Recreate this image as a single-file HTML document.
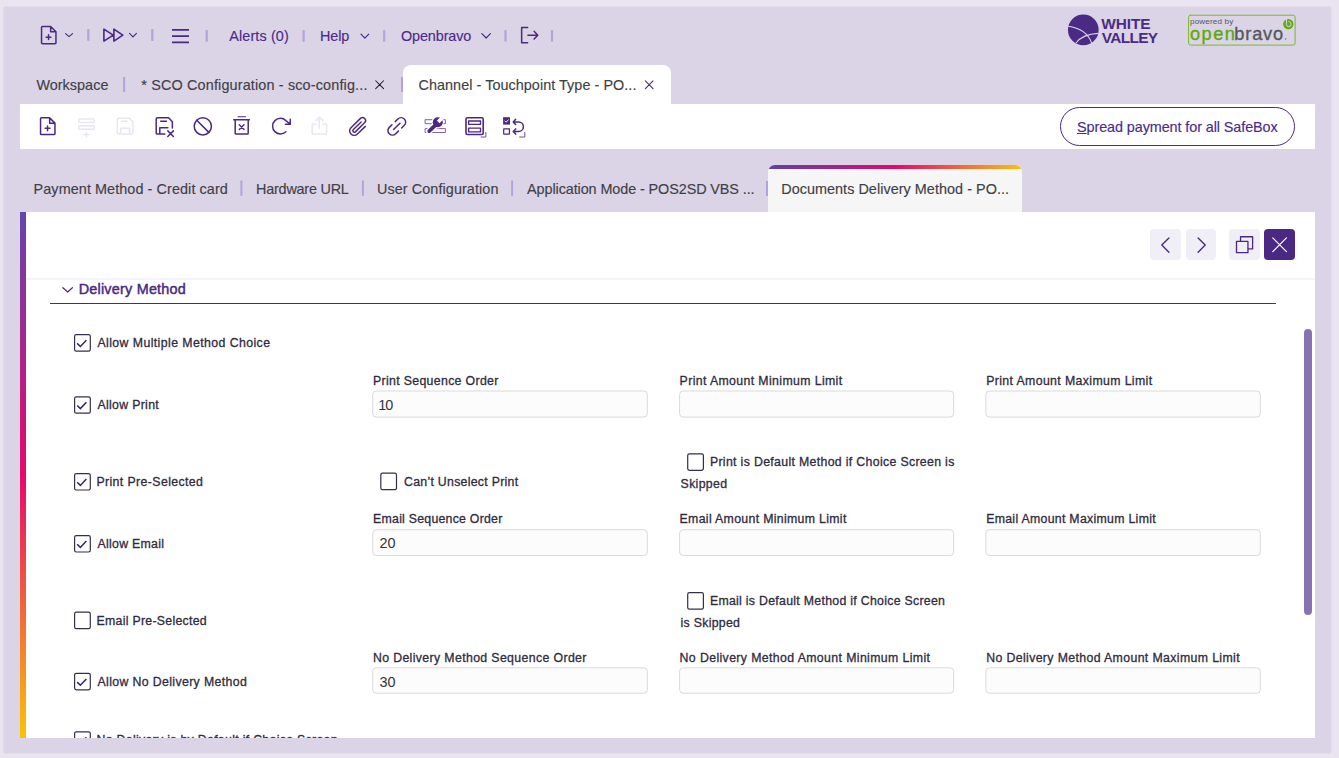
<!DOCTYPE html>
<html lang="en"><head><meta charset="utf-8"><title>Channel - Touchpoint Type - Openbravo</title>
<style>
*{box-sizing:border-box}
html,body{margin:0;padding:0}
body{width:1339px;height:758px;overflow:hidden;position:relative;background:#e9e4ef;font-family:"Liberation Sans",Arial,sans-serif;}
.abs{position:absolute}
#panel{left:4px;top:7px;width:1327px;height:746px;background:#dbd4e6;box-shadow:0 0 1.5px rgba(60,40,90,.14)}
#maintab{left:403px;top:65px;width:268px;height:40px;background:#fff;border-radius:8px 8px 0 0}
#toolbar{left:20px;top:104px;width:1295px;height:45px;background:#fff}
#spread{left:1060.2px;top:107px;width:234.6px;height:38.8px;border:1px solid #4a2883;border-radius:20px;background:#fff}
#subtab{left:768px;top:164.8px;width:253.6px;height:47.4px;background:#f6f6f6;border-radius:7px 7px 0 0;overflow:hidden}
#subtab i{display:block;height:4.3px;background:linear-gradient(90deg,#6040aa 0%,#e6086b 50%,#fdc106 100%)}
#form{left:20px;top:212px;width:1295px;height:526px;background:#fff}
#gbar{left:20px;top:212px;width:6px;height:526px;background:linear-gradient(180deg,#6446ad 0%,#e6086b 50%,#fdc106 100%)}
#gbar2{left:20px;top:212px;width:6.4px;height:67.5px;background:linear-gradient(180deg,#6446ad 0%,#e6086b 50%,#fdc106 100%);background-size:100% 526px}
#hline{left:26px;top:278.1px;width:1289px;height:1.7px;background:#f5f4fa}
#sline{left:50.3px;top:302.8px;width:1225.7px;height:1.1px;background:#4a2883}
.btn{top:229.2px;width:30.8px;height:30.8px;border-radius:4px;background:#f0eef6}
#sb{left:1304px;top:329px;width:7.5px;height:286px;border-radius:4px;background:#8972b0}
#bottom{left:4px;top:738px;width:1327px;height:15px;background:#dbd4e6}
.t{position:absolute;white-space:nowrap;line-height:20px;height:20px}
.nav{color:#4a2b8a;-webkit-text-stroke:0.15px #4a2b8a}
.tab{color:#3f3f46;-webkit-text-stroke:0.15px #3f3f46}
.sec{color:#4a2883;-webkit-text-stroke:0.45px #4a2883}
.lab{color:#2f2b3f;-webkit-text-stroke:0.3px #2f2b3f}
.val{color:#33333a}
.wv{color:#4b2a85}
.pw{color:#555}
.obg{color:#5fa80e;-webkit-text-stroke:0.36px #5fa80e}
.obd{color:#55595c;-webkit-text-stroke:0.36px #55595c}
svg{position:absolute;left:0;top:0;overflow:visible}
</style></head>
<body>
<div id="panel" class="abs"></div>
<div class="abs" style="left:400.5px;top:77px;width:2px;height:15px;background:#b5a1de"></div>
<div id="maintab" class="abs"></div>
<div id="toolbar" class="abs"></div>
<div id="spread" class="abs"></div>
<div class="abs" style="left:766.1px;top:180.5px;width:2px;height:15.3px;background:#b5a1de"></div>
<div id="subtab" class="abs"><i></i></div>
<div id="form" class="abs"></div>
<div id="gbar" class="abs"></div>
<div id="gbar2" class="abs"></div>
<div id="hline" class="abs"></div>
<div id="sline" class="abs"></div>
<div class="abs btn" style="left:1150.4px"></div>
<div class="abs btn" style="left:1185.6px"></div>
<div class="abs btn" style="left:1229.1px"></div>
<div class="abs btn" style="left:1264px;background:#4a2883"></div>
<div id="sb" class="abs"></div>
<svg width="1339" height="758" viewBox="0 0 1339 758" fill="none"><rect x="372.7" y="391" width="274.6" height="26.1" rx="3.5" fill="#fcfcfc" stroke="#dadade" stroke-width="1"/>
<rect x="372.7" y="529.7" width="274.6" height="25.8" rx="3.5" fill="#fcfcfc" stroke="#dadade" stroke-width="1"/>
<rect x="372.7" y="667.8" width="274.6" height="25.4" rx="3.5" fill="#fcfcfc" stroke="#dadade" stroke-width="1"/>
<rect x="679.6" y="391" width="274" height="26.1" rx="3.5" fill="#fcfcfc" stroke="#dadade" stroke-width="1"/>
<rect x="679.6" y="529.7" width="274" height="25.8" rx="3.5" fill="#fcfcfc" stroke="#dadade" stroke-width="1"/>
<rect x="679.6" y="667.8" width="274" height="25.4" rx="3.5" fill="#fcfcfc" stroke="#dadade" stroke-width="1"/>
<rect x="985.9" y="391" width="274.4" height="26.1" rx="3.5" fill="#fcfcfc" stroke="#dadade" stroke-width="1"/>
<rect x="985.9" y="529.7" width="274.4" height="25.8" rx="3.5" fill="#fcfcfc" stroke="#dadade" stroke-width="1"/>
<rect x="985.9" y="667.8" width="274.4" height="25.4" rx="3.5" fill="#fcfcfc" stroke="#dadade" stroke-width="1"/>
<rect x="74.6" y="334.7" width="15.7" height="16.4" rx="1.7" fill="#fff" stroke="#34304a" stroke-width="1.2"/><path d="M77.2,343.4L80.35,346.5L86.4,340.2" fill="none" stroke="#3a1f6e" stroke-width="1.5"/>
<rect x="74.6" y="396.8" width="15.7" height="16.4" rx="1.7" fill="#fff" stroke="#34304a" stroke-width="1.2"/><path d="M77.2,405.5L80.35,408.6L86.4,402.3" fill="none" stroke="#3a1f6e" stroke-width="1.5"/>
<rect x="74.6" y="473.6" width="15.7" height="16.4" rx="1.7" fill="#fff" stroke="#34304a" stroke-width="1.2"/><path d="M77.2,482.3L80.35,485.4L86.4,479.1" fill="none" stroke="#3a1f6e" stroke-width="1.5"/>
<rect x="74.6" y="535.6" width="15.7" height="16.4" rx="1.7" fill="#fff" stroke="#34304a" stroke-width="1.2"/><path d="M77.2,544.3L80.35,547.4L86.4,541.1" fill="none" stroke="#3a1f6e" stroke-width="1.5"/>
<rect x="74.6" y="612.2" width="15.7" height="16.4" rx="1.7" fill="#fff" stroke="#34304a" stroke-width="1.2"/>
<rect x="74.6" y="673.4" width="15.7" height="16.4" rx="1.7" fill="#fff" stroke="#34304a" stroke-width="1.2"/><path d="M77.2,682.1L80.35,685.2L86.4,678.9" fill="none" stroke="#3a1f6e" stroke-width="1.5"/>
<rect x="74.6" y="731.8" width="15.7" height="16.4" rx="1.7" fill="#fff" stroke="#34304a" stroke-width="1.2"/><path d="M77.2,740.5L80.35,743.6L86.4,737.3" fill="none" stroke="#3a1f6e" stroke-width="1.5"/>
<rect x="380.8" y="473.2" width="15.7" height="16.4" rx="1.7" fill="#fff" stroke="#34304a" stroke-width="1.2"/>
<rect x="687.7" y="453.9" width="15.7" height="16.4" rx="1.7" fill="#fff" stroke="#34304a" stroke-width="1.2"/>
<rect x="687.7" y="592.7" width="15.7" height="16.4" rx="1.7" fill="#fff" stroke="#34304a" stroke-width="1.2"/></svg>
<div class="t nav" style="left:229.30px;top:26.00px;font-size:14.4px;letter-spacing:0.114px">Alerts (0)</div>
<div class="t nav" style="left:320.00px;top:26.00px;font-size:14.4px;letter-spacing:-0.098px">Help</div>
<div class="t nav" style="left:401.00px;top:26.00px;font-size:14.4px;letter-spacing:-0.112px">Openbravo</div>
<div class="t tab" style="left:36.40px;top:75.00px;font-size:14.4px;letter-spacing:0.036px">Workspace</div>
<div class="t tab" style="left:141.30px;top:75.00px;font-size:14.4px;letter-spacing:0.157px">* SCO Configuration - sco-config...</div>
<div class="t tab" style="left:418.50px;top:75.00px;font-size:14.4px;letter-spacing:0.051px">Channel - Touchpoint Type - PO...</div>
<div class="t nav" style="left:1077.00px;top:117.00px;font-size:14.4px;letter-spacing:-0.086px"><u>S</u>pread payment for all SafeBox</div>
<div class="t tab" style="left:33.60px;top:179.00px;font-size:14.4px;letter-spacing:0.083px">Payment Method - Credit card</div>
<div class="t tab" style="left:256.10px;top:179.00px;font-size:14.4px;letter-spacing:-0.224px">Hardware URL</div>
<div class="t tab" style="left:377.00px;top:179.00px;font-size:14.4px;letter-spacing:0.084px">User Configuration</div>
<div class="t tab" style="left:527.10px;top:179.00px;font-size:14.4px;letter-spacing:-0.089px">Application Mode - POS2SD VBS ...</div>
<div class="t tab" style="left:781.20px;top:179.00px;font-size:14.4px;letter-spacing:0.046px">Documents Delivery Method - PO...</div>
<div class="t sec" style="left:78.70px;top:279.00px;font-size:14.4px;letter-spacing:0.224px">Delivery Method</div>
<div class="t lab" style="left:97.40px;top:333.00px;font-size:12.3px;letter-spacing:0.420px">Allow Multiple Method Choice</div>
<div class="t lab" style="left:97.40px;top:395.00px;font-size:12.3px;letter-spacing:0.323px">Allow Print</div>
<div class="t lab" style="left:96.40px;top:472.00px;font-size:12.3px;letter-spacing:0.397px">Print Pre-Selected</div>
<div class="t lab" style="left:97.40px;top:534.00px;font-size:12.3px;letter-spacing:0.308px">Allow Email</div>
<div class="t lab" style="left:96.50px;top:611.00px;font-size:12.3px;letter-spacing:0.288px">Email Pre-Selected</div>
<div class="t lab" style="left:97.50px;top:672.00px;font-size:12.3px;letter-spacing:0.368px">Allow No Delivery Method</div>
<div class="t lab" style="left:96.50px;top:730.00px;font-size:12.3px;letter-spacing:0.312px">No Delivery is by Default if Choice Screen</div>
<div class="t lab" style="left:372.90px;top:371.00px;font-size:12.3px;letter-spacing:0.345px">Print Sequence Order</div>
<div class="t lab" style="left:679.60px;top:371.00px;font-size:12.3px;letter-spacing:0.379px">Print Amount Minimum Limit</div>
<div class="t lab" style="left:986.20px;top:371.00px;font-size:12.3px;letter-spacing:0.378px">Print Amount Maximum Limit</div>
<div class="t lab" style="left:404.00px;top:472.00px;font-size:12.3px;letter-spacing:0.287px">Can’t Unselect Print</div>
<div class="t lab" style="left:709.90px;top:452.00px;font-size:12.3px;letter-spacing:0.336px">Print is Default Method if Choice Screen is</div>
<div class="t lab" style="left:680.60px;top:474.00px;font-size:12.3px;letter-spacing:0.333px">Skipped</div>
<div class="t lab" style="left:373.10px;top:509.00px;font-size:12.3px;letter-spacing:0.252px">Email Sequence Order</div>
<div class="t lab" style="left:679.60px;top:509.00px;font-size:12.3px;letter-spacing:0.328px">Email Amount Minimum Limit</div>
<div class="t lab" style="left:986.20px;top:509.00px;font-size:12.3px;letter-spacing:0.300px">Email Amount Maximum Limit</div>
<div class="t lab" style="left:709.90px;top:591.00px;font-size:12.3px;letter-spacing:0.296px">Email is Default Method if Choice Screen</div>
<div class="t lab" style="left:680.60px;top:613.00px;font-size:12.3px;letter-spacing:0.289px">is Skipped</div>
<div class="t lab" style="left:372.90px;top:648.00px;font-size:12.3px;letter-spacing:0.371px">No Delivery Method Sequence Order</div>
<div class="t lab" style="left:679.60px;top:648.00px;font-size:12.3px;letter-spacing:0.386px">No Delivery Method Amount Minimum Limit</div>
<div class="t lab" style="left:986.20px;top:648.00px;font-size:12.3px;letter-spacing:0.375px">No Delivery Method Amount Maximum Limit</div>
<div class="t val" style="left:378.30px;top:394.50px;font-size:14.4px;letter-spacing:-1.103px">10</div>
<div class="t val" style="left:379.40px;top:533.00px;font-size:14.4px;letter-spacing:-0.003px">20</div>
<div class="t val" style="left:379.40px;top:671.70px;font-size:14.4px;letter-spacing:-0.003px">30</div>
<div class="t wv" style="left:1101.30px;top:13.60px;font-size:15.4px;letter-spacing:-0.080px;font-weight:700">WHITE</div>
<div class="t wv" style="left:1101.80px;top:27.80px;font-size:15.4px;letter-spacing:-0.661px;font-weight:700">VALLEY</div>
<div class="t pw" style="left:1190.00px;top:12.00px;font-size:8.1px;letter-spacing:0.156px">powered by</div>
<div class="t obg" style="left:1189.90px;top:24.00px;font-size:18.2px;letter-spacing:1.518px">open</div>
<div class="t obd" style="left:1234.30px;top:24.00px;font-size:18.2px;letter-spacing:0.830px">bravo</div>
<div id="bottom" class="abs"></div>
<svg width="1339" height="758" viewBox="0 0 1339 758" fill="none" stroke="#4a2883" stroke-width="1.5" stroke-linecap="round" stroke-linejoin="round"><circle cx="1083.3" cy="29.95" r="15.35" fill="#4b2a85" stroke="none"/>
<path d="M1067.9,26.3C1077,27.5 1087.5,31.5 1091.6,42.9M1076,43C1080.5,37 1087.5,33.9 1098.3,33.4" stroke="#dbd4e6" stroke-width="1.15" stroke-linecap="butt"/>
<rect x="1188.6" y="15.2" width="106.5" height="29.9" rx="2" stroke="#7ab929" stroke-width="1"/>
<circle cx="1288.3" cy="24.1" r="5.2" fill="#62ab12" stroke="none"/>
<path d="M1286.45,18.6V24.6A2.35,2.35 0 0 0 1291.1,24.6C1291.1,22.7 1289.9,21.5 1288.5,21.4" stroke="#e2dbee" stroke-width="0.95" stroke-linecap="butt"/>
<circle cx="1285.6" cy="38.9" r="0.85" fill="#8a8d90" stroke="none"/>
<path d="M42.45,26.45H50.65L55.95,31.75V42.75Q55.95,43.65 55.05,43.65H42.45Q41.55,43.65 41.55,42.75V27.35Q41.55,26.45 42.45,26.45ZM50.65,26.45V31.75H55.95M46.15,37.2H50.95M48.55,34.8V39.6" stroke-width="1.5"/>
<path d="M65.58,33.58L69.05,36.62L72.52,33.58" stroke-width="1.15"/>
<rect x="87.2" y="29" width="2.2" height="11.8" fill="#b5a1de" stroke="none"/>
<path d="M103.9,29.2V41.1L113.2,35.15ZM113.9,29.2V41.1L122.8,35.15Z" stroke-width="1.6"/>
<path d="M129.53,33.38L132.98,36.92L136.43,33.38" stroke-width="1.15"/>
<rect x="151.2" y="29" width="2.2" height="11.9" fill="#b5a1de" stroke="none"/>
<path d="M172,29.9H189M172,36.1H189M172,42.3H189" stroke-width="1.65" stroke-linecap="butt"/>
<rect x="205.6" y="30" width="2.2" height="11.7" fill="#b5a1de" stroke="none"/>
<rect x="302.5" y="30" width="2.2" height="11.7" fill="#b5a1de" stroke="none"/>
<path d="M360.97,34.08L364.85,38.12L368.73,34.08" stroke-width="1.15"/>
<rect x="383.1" y="30.1" width="2.2" height="11.5" fill="#b5a1de" stroke="none"/>
<path d="M481.88,33.68L486.15,38.02L490.43,33.68" stroke-width="1.15"/>
<rect x="504.4" y="30.1" width="2.2" height="11.5" fill="#b5a1de" stroke="none"/>
<path d="M527.6,27.45H521.65V42.85H527.6M527.9,35.15H537.7M534.1,31.3L537.75,35.15L534.1,39" stroke-width="1.5"/>
<rect x="550.9" y="30.1" width="2.2" height="11.5" fill="#b5a1de" stroke="none"/>
<rect x="123.1" y="77" width="2" height="15.1" fill="#b5a1de" stroke="none"/>
<path d="M375.7,80.75L383.6,88.65M383.6,80.75L375.7,88.65" stroke-width="1.05" stroke="#1e1e22"/>
<path d="M645.35,80.95L653.05,88.65M653.05,80.95L645.35,88.65" stroke-width="1.1" stroke="#4a2883"/>
<rect x="240.4" y="180.5" width="2" height="15.3" fill="#b5a1de" stroke="none"/>
<rect x="361.9" y="180.5" width="2" height="15.3" fill="#b5a1de" stroke="none"/>
<rect x="511.1" y="180.5" width="2" height="15.3" fill="#b5a1de" stroke="none"/>
<path d="M41.45,117.85H49.65L54.95,123.15V133.65Q54.95,134.55 54.05,134.55H41.45Q40.55,134.55 40.55,133.65V118.75Q40.55,117.85 41.45,117.85ZM49.65,117.85V123.15H54.95M45.15,128.29H49.95M47.55,125.89V130.69" stroke-width="1.5"/>
<g stroke="#e9e6f1"><rect x="78.75" y="119.05" width="15.6" height="3.5" rx="0.8"/><rect x="78.75" y="125.85" width="15.6" height="3.4" rx="0.8"/><path d="M84,134.55H88.8M86.4,132.2V136.9" stroke-width="1.4"/></g>
<path d="M118.55,118.35H129.35L132.95,121.95V132.75Q132.95,133.95 131.75,133.95H118.55Q117.35,133.95 117.35,132.75V119.55Q117.35,118.35 118.55,118.35ZM122.05,121.25H126.65M120.75,133.95V128.35H129.55V133.95" stroke-width="1.5" stroke="#e9e6f1"/>
<path d="M164.8,134.05H157.3Q156.2,134.05 156.2,132.95V118.95Q156.2,117.85 157.3,117.85H168.6L172.35,121.7V127.9M159.8,134V127.8H167.9M160.7,121.2H166.4" stroke-width="1.5"/>
<path d="M167.8,130.85L173.4,136.45M173.4,130.85L167.8,136.45" stroke-width="1.5"/>
<circle cx="202.8" cy="126.3" r="8.6"/><path d="M196.75,120.25L208.85,132.35"/>
<path d="M238,116.7H245.5" stroke-width="1.1"/><path d="M233.75,119.7H249.35M235.2,119.7V133.2Q235.2,133.95 235.95,133.95H247.45Q248.2,133.95 248.2,133.2V119.7" stroke-width="1.5"/>
<path d="M239.3,124.75L244,129.45M244,124.75L239.3,129.45" stroke-width="1.45"/>
<path d="M285.9,131.7A7.8,7.8 0 1 1 285.9,120.6L290.3,124.3M290.3,119.3V124.3H285.4" stroke-width="1.5"/>
<g stroke="#e9e6f1"><path d="M315.9,123.9H312.2V133.2Q312.2,134 313,134H325.8Q326.6,134 326.6,133.2V123.9H322.6M319.3,128.2V117.1M315.9,120.4L319.3,117L322.7,120.4"/></g>
<path d="M160,80,76.7,164.7a16,16,0,0,0,22.6,22.6L198.6,86.6a32,32,0,0,0-45.2-45.2L53.4,142.1a48,48,0,0,0,67.9,67.9L204,128" transform="translate(345.88,114.56) scale(0.09520,0.09243)" vector-effect="non-scaling-stroke" stroke-width="1.45"/>
<path d="M94.1,161.9L161.9,94.1M145,178.9l-28.3,28.3a48,48,0,0,1-67.9-67.9L77.1,111M179,145l28.3-28.3a48,48,0,0,0-67.9-67.9L111.1,77" transform="translate(384.66,114.41) scale(0.09484,0.09329)" vector-effect="non-scaling-stroke" stroke-width="1.5"/>
<g stroke="#7d62b0" stroke-width="1"><rect x="425.5" y="119.7" width="19.9" height="4"/><rect x="425.5" y="128.6" width="19.9" height="3.9"/></g>
<g stroke="#fff" fill="#fff"><path d="M429.2,131.1L436.2,124.4" stroke-width="6.4"/><circle cx="437.7" cy="122.3" r="6.2" stroke="none"/></g>
<path d="M429.2,131.1L436.2,124.4" stroke-width="3.7"/><circle cx="437.8" cy="122.3" r="5" fill="#4a2883" stroke="none"/>
<path d="M438.2,121.9L443.6,116.5" stroke="#fff" stroke-width="3.7" stroke-linecap="butt"/>
<rect x="466" y="117.8" width="17.2" height="16.7" rx="1.4" stroke-width="1.6"/>
<rect x="468.6" y="121" width="11.9" height="3.3" stroke-width="1.35"/><rect x="468.6" y="128.1" width="11.9" height="3.8" stroke-width="1.35"/>
<path d="M485.8,132.4V137H481" stroke-width="1" stroke="#6c4fa6"/>
<rect x="503.1" y="117.2" width="6.9" height="7.4" fill="#4a2883" stroke="none"/><path d="M505,121L506.2,122.2L508.3,119.8" stroke="#fff" stroke-width="0.9"/>
<rect x="503.7" y="128.8" width="5.7" height="5.3" stroke-width="1.2"/>
<path d="M515.7,119.3L513.2,121.9L515.7,124.5M513.2,121.9H518.6A4.8,4.8 0 0 1 518.6,131.5H513.2M515.7,128.9L513.2,131.5L515.7,134.1" stroke-width="1.5"/>
<path d="M524.8,132.4V137H519.6" stroke-width="1" stroke="#6c4fa6"/>
<path d="M1168.9,237.9L1161.8,245.05L1168.9,252.2M1198.1,237.9L1205.2,245.05L1198.1,252.2" stroke-width="1.35"/>
<rect x="1236.5" y="241.45" width="11.45" height="11.2" stroke-width="1.3"/><path d="M1240.55,241V236.75H1252.6V248.9H1248.4" stroke-width="1.3"/>
<path d="M1272.75,237.9L1286.45,251.6M1286.45,237.9L1272.75,251.6" stroke-width="1.25" stroke="#fff"/>
<path d="M62.9,287.7L67.65,292L72.4,287.7" stroke-width="1.2"/></svg>
</body></html>
